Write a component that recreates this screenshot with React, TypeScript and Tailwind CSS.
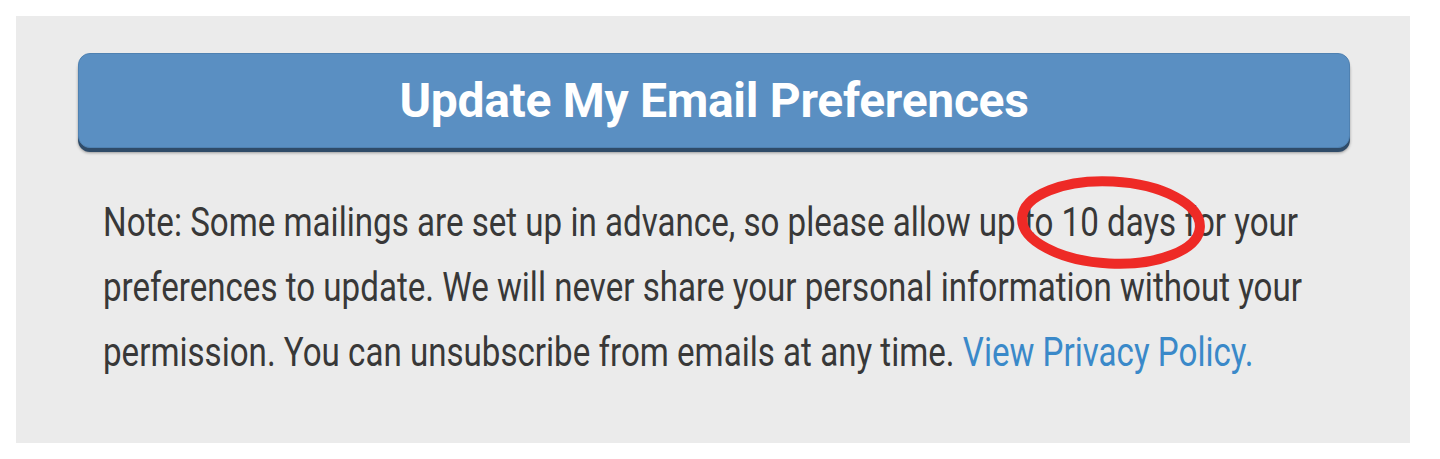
import React from "react";

const font = { fontFamily: 'Roboto, "Liberation Sans", sans-serif' };

const App = () => {
  return (
    <div className="bg-white w-[1440px] h-[459px] pt-4 pl-4">
      <div className="relative w-[1394px] h-[427px] bg-[#ebebeb] pt-[37px] px-[62px]">
        {/* Button */}
        <button
          className="flex items-center justify-center w-[1272px] h-[95px] rounded-[12px] bg-[#5a8fc2] text-white shadow-[0_4px_0_#2f4b68,0_5px_3px_rgba(0,0,0,0.35)] border border-[#4f81b1]"
          style={font}
        >
          <span className="whitespace-nowrap font-bold text-[48px] leading-none tracking-[-0.3px]">
            Update My Email Preferences
          </span>
        </button>

        {/* Note */}
        <div className="mt-[42px] pl-[25px] overflow-hidden">
          <p
            className="inline-block text-[40px] leading-[65px] text-[#383838] whitespace-nowrap scale-x-[0.828] origin-left"
            style={font}
          >
            Note: Some mailings are set up in advance, so please allow up to 10 days for your
            <br />
            preferences to update. We will never share your personal information without your
            <br />
            permission. You can unsubscribe from emails at any time.{" "}
            <a href="#" className="text-[#3a89c9]">
              View Privacy Policy.
            </a>
          </p>
        </div>

        {/* Annotation */}
        <svg
          className="absolute left-[1000px] top-[159px] pointer-events-none"
          width="190"
          height="95"
          viewBox="0 0 190 95"
        >
          <ellipse
            cx="95"
            cy="47.5"
            rx="89"
            ry="41"
            fill="none"
            stroke="#ee2a26"
            strokeWidth="10"
            transform="rotate(3 95 47.5)"
          />
        </svg>
      </div>
    </div>
  );
};

export default App;
